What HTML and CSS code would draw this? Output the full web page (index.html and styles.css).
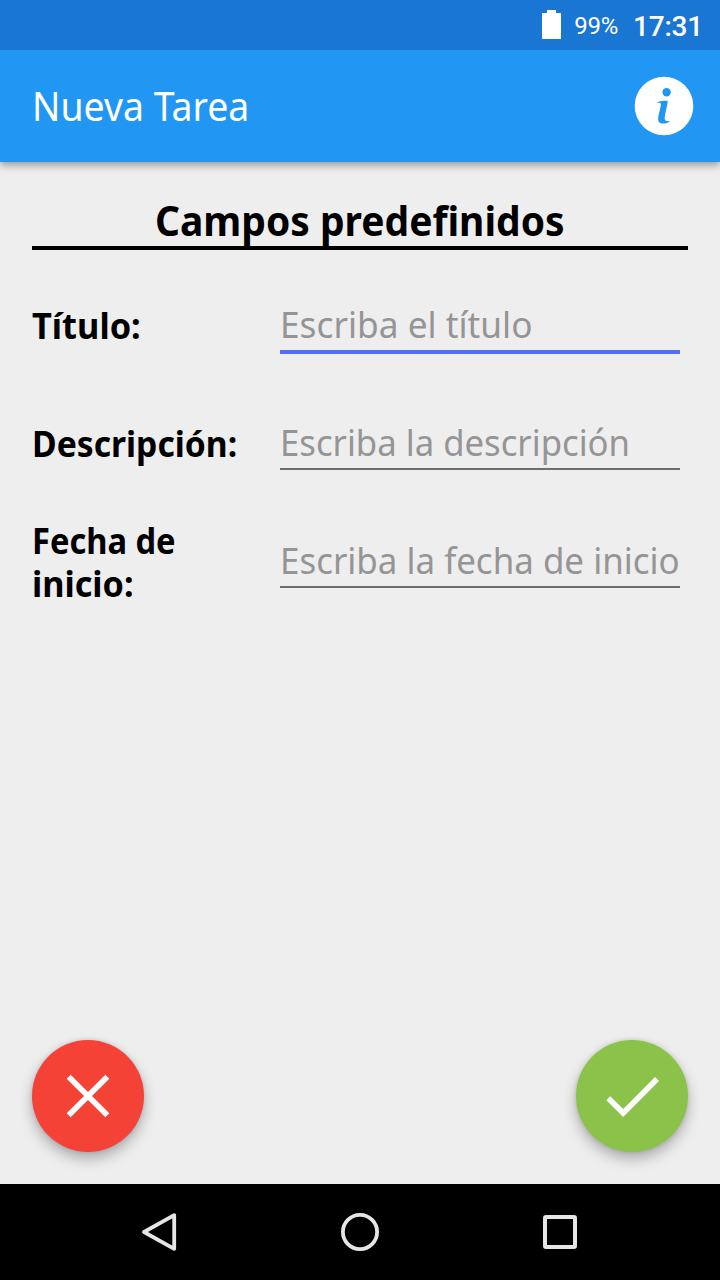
FILE: index.html
```html
<!DOCTYPE html>
<html lang="es">
<head>
<meta charset="utf-8">
<title>Nueva Tarea</title>
<link rel="stylesheet" href="styles.css">
</head>
<body>
<div class="screen">
  <div class="status">
    <svg class="battery" width="19" height="29" viewBox="0 0 19 29"><path d="M5 0h9v3h5v26H0V3h5z" fill="#fff"/></svg>
    <span class="percent">99%</span>
    <span class="clock">17:31</span>
  </div>
  <header class="bar">
    <h1 class="title">Nueva Tarea</h1>
    <svg class="info" width="60" height="60" viewBox="0 0 60 60">
      <circle cx="30" cy="30" r="29.3" fill="#fff"/>
      <circle cx="32.6" cy="16.3" r="4.2" fill="#2196f3"/>
      <path d="M22.3 26.8C25 24.8 29.500 24.700 33.800 24.700C33.200 31 30.700 38.500 30.700 42.500C30.700 45.300 32.500 45.100 36 45C33.800 47.100 30.800 47.700 28.200 47.500C24.500 47.300 23.900 44.800 24.300 41.300C24.700 36.500 26.800 32 26.900 28.500C27 26.300 25 26.700 22.300 26.800Z" fill="#2196f3"/>
    </svg>
  </header>
  <main class="content">
    <h2 class="section"><span class="section-text">Campos predefinidos</span></h2>
    <div class="row"><div class="label"><span class="l1">Título:</span></div><div class="field active"><span class="p1">Escriba el título</span></div></div>
    <div class="row"><div class="label"><span class="l2">Descripción:</span></div><div class="field"><span class="p2">Escriba la descripción</span></div></div>
    <div class="row"><div class="label two-line"><span class="l3">Fecha de</span><span class="l4">inicio:</span></div><div class="field"><span class="p3">Escriba la fecha de inicio</span></div></div>
  </main>
  <div class="actions">
    <div class="fab cancel"><svg width="112" height="112" viewBox="0 0 112 112"><path d="M36.700 36.700L75.300 75.300M75.300 36.700L36.700 75.300" fill="none" stroke="#fff" stroke-width="5.600"/></svg></div>
    <div class="fab accept"><svg width="112" height="112" viewBox="0 0 112 112"><path d="M32.300 58.200L47.200 73L81 39" fill="none" stroke="#fff" stroke-width="5.600"/></svg></div>
  </div>
  <nav class="nav">
    <svg width="48" height="48" viewBox="0 0 48 48"><path d="M38.200 7.200V40.800L8 24Z" fill="none" stroke="#e6e6e6" stroke-width="3.800" stroke-linejoin="round"/></svg>
    <svg width="48" height="48" viewBox="0 0 48 48"><circle cx="24" cy="24" r="17.100" fill="none" stroke="#e6e6e6" stroke-width="3.800"/></svg>
    <svg width="48" height="48" viewBox="0 0 48 48"><rect x="9" y="9" width="30" height="30" rx="1" fill="none" stroke="#e6e6e6" stroke-width="4"/></svg>
  </nav>
</div>
</body>
</html>
```
FILE: styles.css
```css
* { box-sizing: border-box; }
body { margin: 0; background: #eee; font-family: "Noto Sans", sans-serif; }
.screen { width: 720px; height: 1280px; display: flex; flex-direction: column; background: #eee; overflow: hidden; }
.status { position: relative; z-index: 1; height: 50px; flex: none; background: #1976d2; color: #fff; font-family: Roboto, sans-serif; display: flex; align-items: center; justify-content: flex-end; padding-right: 17px; }
.battery { margin-bottom: 1px; }
.percent { font-size: 24px; letter-spacing: -.3px; margin: 2px 15px 0 13px; }
.clock { font-size: 28px; font-weight: 500; padding-top: 2px; letter-spacing: -.2px; }
.bar { height: 112px; flex: none; background: #2196f3; color: #fff; display: flex; align-items: center; justify-content: space-between; padding: 0 26px 0 32px; box-shadow: 0 3px 8px rgba(0,0,0,.38); }
.title { margin: 0; font-size: 40px; font-weight: 400; line-height: 54px; white-space: nowrap; transform: scaleX(.936); transform-origin: left; }
.content { flex: 1; padding: 32px 32px 0; }
.section { margin: 0 0 16px; height: 56px; border-bottom: 4px solid #000; font-size: 42px; font-weight: 700; line-height: 51px; white-space: nowrap; display: flex; justify-content: center; }
.section-text { transform: scaleX(.928); }
.row { height: 118px; display: flex; align-items: center; }
.label { width: 240px; height: 86px; flex: none; font-size: 36px; font-weight: 700; line-height: 43px; display: flex; flex-direction: column; justify-content: center; align-items: flex-start; white-space: nowrap; }
.two-line { margin-top: 2px; }
.label span { transform-origin: left; }
.l1 { transform: scaleX(.955); }
.l2 { transform: scaleX(.935); }
.l3 { transform: scaleX(.906); }
.l4 { transform: scaleX(.95); }
.field { width: 400px; height: 56px; margin: 0 0 2px 8px; border-bottom: 2px solid #6d6d6d; color: #959595; font-size: 36px; line-height: 58px; white-space: nowrap; }
.field span { display: inline-block; transform-origin: left; }
.p1 { transform: scaleX(.979); }
.p2 { transform: scaleX(.964); }
.p3 { transform: scaleX(.97); }
.active { height: 58px; margin-bottom: 0; border-bottom: 4px solid #536dfe; }
.actions { height: 144px; flex: none; padding: 0 32px; display: flex; justify-content: space-between; }
.fab { width: 112px; height: 112px; border-radius: 50%; box-shadow: 0 7px 14px rgba(0,0,0,.27), 0 0 4px rgba(0,0,0,.13); }
.fab svg { display: block; }
.cancel { background: #f44336; }
.accept { background: #8bc34a; }
.nav { height: 96px; flex: none; background: #000; display: flex; align-items: center; justify-content: center; gap: 152px; }
```
